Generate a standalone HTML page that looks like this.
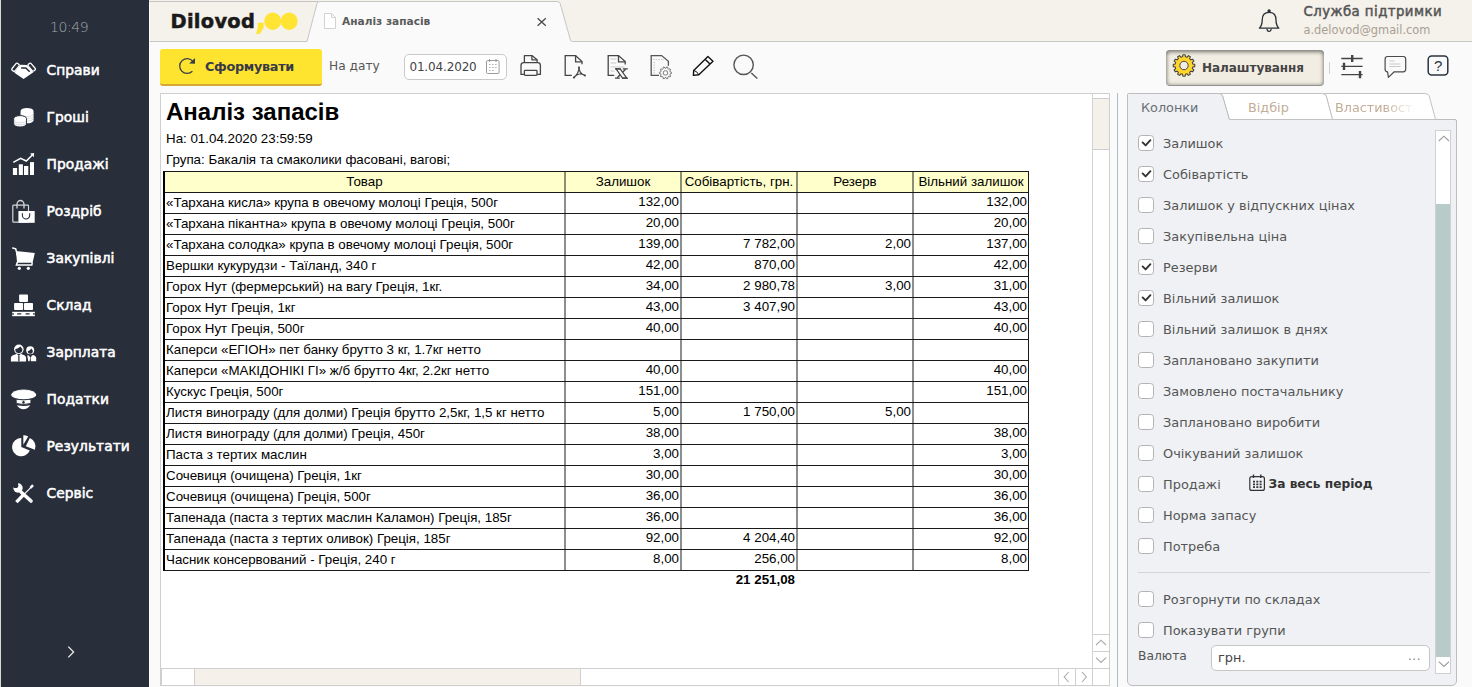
<!DOCTYPE html>
<html lang="uk">
<head>
<meta charset="utf-8">
<title>Dilovod - Аналіз запасів</title>
<style>
*{box-sizing:border-box;margin:0;padding:0}
html,body{width:1472px;height:687px;overflow:hidden;background:#fafafa}
body{position:relative;font-family:"DejaVu Sans","Liberation Sans",sans-serif;font-size:13px;color:#555}
.abs{position:absolute}
.nw{white-space:nowrap}
/* sidebar */
#side{position:absolute;left:0;top:0;width:149px;height:687px;background:#282e3a;border-left:1px solid #d8d8d8}
#clock{position:absolute;left:49px;top:18px;font-family:"DejaVu Sans","Liberation Sans",sans-serif;font-weight:200;font-size:14px;color:#a3a8b0;letter-spacing:-0.4px;line-height:18px}
.mi{position:absolute;left:45.5px;color:#fff;font-weight:normal;-webkit-text-stroke:0.55px #fff;font-size:13.8px;line-height:18px;white-space:nowrap;letter-spacing:0.05px}
.ic{position:absolute;left:0;overflow:visible}
/* top bar */
#top{position:absolute;left:149px;top:0;width:1323px;height:42px;background:#f5f1eb}
#logo{position:absolute;left:170.5px;top:8.5px;font-family:"DejaVu Sans","Liberation Sans",sans-serif;font-weight:bold;font-size:19.4px;line-height:26px;color:#1a1a1a;white-space:nowrap;letter-spacing:0.3px;-webkit-text-stroke:0.5px #1a1a1a}
#lc{position:absolute;left:84.2px;top:-10.5px;font-size:33px;line-height:40px;color:#ffe433;-webkit-text-stroke:0}
.lz{position:absolute;top:0.5px;font-size:15px;line-height:26px;color:#ffe433;-webkit-text-stroke:0}
#tabt{left:342px;top:12px;font-size:10.6px;font-weight:bold;color:#5a5a5a;line-height:18px}
#usr{left:1303.5px;top:3px;font-size:13.3px;font-weight:normal;-webkit-text-stroke:0.5px #555;letter-spacing:0.45px;color:#555;line-height:18px}
#eml{left:1303.5px;top:22px;font-size:11.4px;color:#a89f92;line-height:16px}
/* toolbar */
#tb{position:absolute;left:150px;top:42px;width:1322px;height:52px;background:#fafafa}
#btn{position:absolute;left:160px;top:49px;width:162px;height:37px;background:#ffe42f;border-radius:3px;border-bottom:2px solid #d5a832}
#btn span{position:absolute;left:45px;top:9px;font-weight:bold;font-size:12.8px;line-height:18px;color:#383a46;white-space:nowrap;letter-spacing:-0.3px}
#nadatu{left:329px;top:57px;font-size:12.2px;line-height:18px;color:#555}
#date{position:absolute;left:404px;top:54px;width:103px;height:26px;background:#fff;border:1px solid #c9c9c9;border-radius:5px}
#date span{position:absolute;left:4.4px;top:3px;font-size:12px;line-height:18px;color:#444;letter-spacing:-0.15px;white-space:nowrap}
#sett{position:absolute;left:1166px;top:50px;width:158px;height:36px;background:#f1ede2;border-radius:4px;box-shadow:inset 0 2px 4px rgba(0,0,0,.42), inset 0 0 4px rgba(0,0,0,.28);border-bottom:1px solid #929292}
#sett span{position:absolute;left:36px;top:9px;font-weight:bold;font-size:12px;line-height:18px;color:#444;white-space:nowrap;letter-spacing:-0.05px}
/* report */
#rep{position:absolute;left:160px;top:93px;width:950px;height:593px;background:#fff;border:1px solid #cfcfcf}
.rt{position:absolute;font-family:"Liberation Sans",sans-serif;color:#000;white-space:nowrap}
#grid{position:absolute;left:163px;top:171px;width:866px;height:400px;border:1px solid #1a1a1a;border-left:2px solid #000}
#grid .hd{position:absolute;left:0;top:0;width:863px;height:20px;background:#ffffcc}
#grid .hl{position:absolute;left:0;width:863px;height:1px;background:#1a1a1a;margin-top:-172px}
#grid .vl{position:absolute;top:0;width:1px;height:398px;background:#484848;margin-left:-165px}
.c{position:absolute;font-family:"Liberation Sans",sans-serif;font-size:13.333px;line-height:21px;height:21px;margin-top:-1px;color:#000;white-space:nowrap}
.c.th{text-align:center;line-height:20px;height:20px;margin-top:0}
.c.n{text-align:right;margin-top:-2px}
#vsb{position:absolute;left:1092px;top:94px;width:17px;height:574px;background:#fff;border-left:1px solid #d2d2d2}
#vth{position:absolute;left:1093px;top:98px;width:16px;height:52px;background:#f5f0ea;border-top:1px solid #cfcfcf;border-bottom:1px solid #cfcfcf}
#hsb{position:absolute;left:161px;top:668px;width:948px;height:17px;background:#fff;border-top:1px solid #cfcfcf;border-left:1px solid #cfcfcf}
#hth{position:absolute;left:194px;top:669px;width:387px;height:16px;background:#f5f0ea;border-left:1px solid #cfcfcf;border-right:1px solid #cfcfcf}
/* right panel */
#splt{position:absolute;left:1117px;top:93px;width:1px;height:594px;background:#a9bfc6}
.tabt{position:absolute;top:99px;font-size:12.8px;line-height:18px;white-space:nowrap}
#tab3{width:82px;overflow:hidden;-webkit-mask-image:linear-gradient(to right,#000 60%,transparent 98%);mask-image:linear-gradient(to right,#000 60%,transparent 98%)}
.cb{position:absolute;left:1138px;width:16px;height:16px;background:#fff;border:1px solid #b3b3b3;border-radius:3.5px}
.lb{position:absolute;left:1163px;font-size:12.9px;line-height:18px;color:#555;white-space:nowrap}
#period{left:1268.5px;top:475px;font-size:12.2px;font-weight:bold;line-height:18px;color:#333}
#sepl{position:absolute;left:1138px;top:572px;width:292px;height:1px;background:#d4d4d4}
#cur{position:absolute;left:1211px;top:645px;width:219px;height:26px;background:#fff;border:1px solid #c6c6c6;border-radius:5px}
#cur span{position:absolute;left:6px;top:3px;font-size:12.9px;line-height:18px;color:#444}
#cur i{position:absolute;right:8px;top:1px;font-style:normal;font-size:12px;line-height:18px;color:#888;letter-spacing:0.5px}
#psb{position:absolute;left:1435px;top:130px;width:16px;height:544px;background:#fff;border:1px solid #d0d0d0}
#pth{position:absolute;left:1436px;top:204px;width:14px;height:453px;background:#b9cbc8}
#pan{position:absolute;left:1127px;top:119px;width:330px;height:567px;background:#eff1f4;border:1px solid #bdbdbd;border-radius:0 2px 5px 5px}
</style>
</head>
<body>
<div id="side">
<div id="clock">10:49</div>
<div class="mi" style="top:61px">Справи</div>
<div class="mi" style="top:108px">Гроші</div>
<div class="mi" style="top:155px">Продажі</div>
<div class="mi" style="top:202px">Роздріб</div>
<div class="mi" style="top:249px">Закупівлі</div>
<div class="mi" style="top:296px">Склад</div>
<div class="mi" style="top:343px">Зарплата</div>
<div class="mi" style="top:390px">Податки</div>
<div class="mi" style="top:437px">Результати</div>
<div class="mi" style="top:484px">Сервіс</div>
<svg class="ic" style="left:-1px;top:0" width="149" height="687" viewBox="0 0 149 687">
<!-- handshake -->
<g>
<polygon points="20.3,64.7 26.8,64.9 33.4,72.2 23.6,79 14.4,72.8" fill="#fff"/>
<path d="M21.1,67.9 L25.8,67.9 L29.7,71.7" fill="none" stroke="#282e3a" stroke-width="1.5"/>
<rect x="-4.4" y="-1.9" width="8.8" height="3.8" rx="1.3" transform="translate(15.5,67.3) rotate(-51)" fill="#282e3a" stroke="#fff" stroke-width="1.3"/>
<rect x="-4.3" y="-1.9" width="8.6" height="3.8" rx="1.3" transform="translate(31.7,67.2) rotate(49)" fill="#282e3a" stroke="#fff" stroke-width="1.3"/>
</g>
<!-- coins -->
<g>
<path d="M20.6,110.9 A6.45,3 0 0 1 33.5,110.9 L33.5,120.3 A6.45,3 0 0 1 20.6,120.3 Z" fill="#fff"/>
<path d="M20.6,113.6 A6.45,3 0 0 0 33.5,113.6 M20.6,115.8 A6.45,3 0 0 0 33.5,115.8 M20.6,118 A6.45,3 0 0 0 33.5,118" fill="none" stroke="#c4c8ce" stroke-width="0.7"/>
<path d="M13.7,118.6 A6.4,3 0 0 1 26.5,118.6 L26.5,124 A6.4,3 0 0 1 13.7,124 Z" fill="#fff" stroke="#282e3a" stroke-width="1"/>
<path d="M13.9,120.6 A6.4,3 0 0 0 26.3,120.6 M13.9,122.6 A6.4,3 0 0 0 26.3,122.6" fill="none" stroke="#c4c8ce" stroke-width="0.7"/>
</g>
<!-- chart -->
<g fill="#fff">
<rect x="12.9" y="168" width="4.2" height="7"/>
<rect x="18.8" y="164.3" width="4.1" height="10.7"/>
<rect x="24" y="166" width="4.3" height="9"/>
<rect x="30" y="162.1" width="4" height="12.9"/>
<path d="M13.3,162.3 L20.6,158.4 L26.3,161 L32.3,155" fill="none" stroke="#fff" stroke-width="1.5" stroke-linejoin="miter"/>
<polygon points="34.1,153.1 33.9,157.3 30,153.6"/>
</g>
<!-- bags -->
<g>
<rect x="12.8" y="205.2" width="15.7" height="17" rx="0.8" fill="none" stroke="#d4d6da" stroke-width="1.2"/>
<path d="M17,208.6 L17,204.2 A3.5,3.7 0 0 1 24,204.2 L24,208.6" fill="none" stroke="#d4d6da" stroke-width="1.3"/>
<rect x="18.4" y="211" width="16.3" height="11.8" fill="#fff"/>
<path d="M22.4,213.3 L22.4,215.2 A3.65,3.8 0 0 0 29.7,215.2 L29.7,213.3" fill="none" stroke="#282e3a" stroke-width="1.1"/>
</g>
<!-- cart -->
<g fill="#fff">
<path d="M12.8,248 L15.7,248.8 L17.6,256" fill="none" stroke="#fff" stroke-width="1.5" stroke-linecap="round"/>
<polygon points="15.9,251 34.8,253 32.6,262.8 17.1,262.8"/>
<path d="M17.4,262 L16.4,265 L31.8,265 L32.3,262.5" fill="none" stroke="#fff" stroke-width="1.5"/>
<circle cx="19.3" cy="268.3" r="1.6"/>
<circle cx="28.3" cy="268.3" r="1.6"/>
</g>
<!-- warehouse -->
<g fill="#fff">
<rect x="19.1" y="294.4" width="8.9" height="7.5" rx="0.8"/>
<rect x="14.1" y="302.9" width="9" height="7.1" rx="0.8"/>
<rect x="24" y="302.9" width="9" height="7.1" rx="0.8"/>
<rect x="12.2" y="311.8" width="22.7" height="4.4"/>
<rect x="12.2" y="313.3" width="1.8" height="1.3" fill="#282e3a"/>
<rect x="17" y="313.3" width="4.4" height="1.3" fill="#282e3a" rx="0.6"/>
<rect x="25.4" y="313.3" width="4.4" height="1.3" fill="#282e3a" rx="0.6"/>
<rect x="33" y="313.3" width="1.9" height="1.3" fill="#282e3a"/>
</g>
<!-- people -->
<g fill="#fff">
<circle cx="18.85" cy="349.3" r="4.8"/>
<path d="M15.2,349.3 Q18,348.8 20.6,346.6 Q21.6,348.6 22.4,349 A3.6,4 0 0 1 15.2,349.3 Z" fill="#282e3a"/>
<path d="M10.9,361.6 L10.9,358.3 Q10.9,355.6 14.5,354.7 L16.8,353.8 L18.85,356 L20.9,353.8 L23,354.7 Q26,355.6 26.1,358.3 L26.1,361.6 Z"/>
<path d="M18.85,355.6 L18.2,356.6 L18.3,361.6 L19.5,361.6 L19.5,356.6 Z" fill="#282e3a"/>
<circle cx="30.2" cy="350.2" r="4"/>
<path d="M27.7,351.2 Q30,350.6 31.6,348.4 Q32.2,350 32.8,350.6 A2.55,2.9 0 0 1 27.7,351.2 Z" fill="#282e3a"/>
<path d="M27.2,355.4 Q29,354.6 30.2,357.4 L29.6,361.2 L28.3,361.2 Z"/>
<path d="M30.9,361.2 L30.6,358 Q31.6,355.2 33,355 Q36.2,355.8 36.2,358.6 L36.2,361.2 Z"/>
</g>
<!-- cap -->
<g fill="#fff">
<ellipse cx="23.7" cy="394.8" rx="12.5" ry="4.7"/>
<path d="M13,392.2 Q23.7,387.6 34.4,392.2" fill="none" stroke="#fff" stroke-width="0.8"/>
<path d="M16.1,399.2 Q23.7,400.6 31,399.2 L30.8,403.4 Q23.7,405.6 16.3,403.4 Z" stroke="#282e3a" stroke-width="0.9"/>
<path d="M16.9,405.2 Q23.7,406.8 30.2,405.2 Q27.5,409.2 23.5,409.2 Q19.5,409.2 16.9,405.2 Z"/>
<ellipse cx="23.5" cy="402.2" rx="1.2" ry="1.5" fill="#282e3a"/>
</g>
<!-- pie -->
<g fill="#fff">
<path d="M21.3,447.1 L21.3,437.9 A9.2,9.2 0 1 0 29.8,450.5 Z"/>
<path d="M23.3,444.8 L23.3,435.2 A9.6,9.6 0 0 1 28.2,436.5 Z"/>
<path d="M25.8,446.3 L29.9,437.9 A9.4,9.4 0 0 1 34.9,449.7 Z"/>
</g>
<!-- tools -->
<g>
<line x1="21" y1="492" x2="31" y2="501" stroke="#fff" stroke-width="3.6" stroke-linecap="round"/>
<circle cx="18" cy="488" r="4.7" fill="#fff"/>
<circle cx="15.6" cy="485.4" r="2.7" fill="#282e3a"/>
<polygon points="11.5,484.5 16.5,480 18.2,483.8 13.8,487.6" fill="#282e3a"/>
<circle cx="31" cy="501" r="0.7" fill="#c4c8ce"/>
<line x1="33" y1="485.2" x2="30.4" y2="487.9" stroke="#fff" stroke-width="2.4"/>
<line x1="31" y1="487.3" x2="23.5" y2="494.8" stroke="#fff" stroke-width="1.2"/>
<line x1="24.6" y1="493.6" x2="16.4" y2="502.2" stroke="#fff" stroke-width="3.4"/>
</g>
<!-- chevron -->
<path d="M68.3,646.6 L73.6,652 L68.3,657.4" fill="none" stroke="#eceef0" stroke-width="1.3"/>
</svg>
</div>
<div id="top"></div>
<svg class="abs" style="left:149px;top:0" width="1323" height="43" viewBox="149 0 1323 43">
<path d="M149,1.5 L318,1.5" stroke="#c4c4c4" stroke-width="1" fill="none"/>
<path d="M149,41.5 L307,41.5 L317,3.5 Q317.6,1.5 320,1.5 L556.5,1.5 Q559.4,1.5 560.2,3.5 L570.4,40 Q570.9,41.5 572.5,41.5 L1472,41.5 L1472,43 L149,43 Z" fill="#fafafa" stroke="none"/>
<path d="M149,41.5 L307,41.5 L317,3.5 Q317.6,1.5 320,1.5 L556.5,1.5 Q559.4,1.5 560.2,3.5 L570.4,40 Q570.9,41.5 572.5,41.5 L1472,41.5" fill="none" stroke="#c6c6c6" stroke-width="1"/>
<!-- doc icon -->
<path d="M324.5,13.5 L331.5,13.5 L335.5,17.5 L335.5,28.5 L324.5,28.5 Z" fill="#fff" stroke="#d2d2d2" stroke-width="1"/>
<path d="M331.5,13.5 L331.5,17.5 L335.5,17.5" fill="none" stroke="#d2d2d2" stroke-width="1"/>
<!-- close -->
<path d="M537.6,18.2 L545.8,25.8 M545.8,18.2 L537.6,25.8" stroke="#4a4a4a" stroke-width="1.3" fill="none"/>
<!-- logo ovals -->
<ellipse cx="272.7" cy="21.2" rx="8.4" ry="8.7" fill="#ffe433"/>
<ellipse cx="289.2" cy="21.2" rx="8.4" ry="8.7" fill="#ffe433"/>
<!-- bell -->
<path d="M1259.4,28.2 Q1262.2,25.4 1262.2,20 Q1262.2,12.4 1269.1,12.4 Q1276,12.4 1276,20 Q1276,25.4 1278.8,28.2 Z" fill="none" stroke="#2b3138" stroke-width="1.3" stroke-linejoin="round"/>
<circle cx="1269.1" cy="11" r="1.7" fill="#2b3138"/>
<path d="M1267,28.8 A2.1,2.6 0 0 0 1271.2,28.8" fill="none" stroke="#2b3138" stroke-width="1.2"/>
</svg>
<div id="logo"><span>Dilovod</span><span id="lc">,</span><span class="lz" style="left:96.2px">0</span><span class="lz" style="left:112.7px">0</span></div>
<div class="abs nw" id="tabt">Аналіз запасів</div>
<div class="abs nw" id="usr">Служба підтримки</div>
<div class="abs nw" id="eml">a.delovod@gmail.com</div>
<div id="tb"></div><div class="abs" style="left:149px;top:2px;width:1px;height:685px;background:#fdfcfb"></div>
<div id="btn"><span>Сформувати</span></div>
<div class="abs nw" id="nadatu">На дату</div>
<div id="date"><span>01.04.2020</span></div>
<div id="sett"><span>Налаштування</span></div>
<svg class="abs" style="left:150px;top:42px" width="1322" height="52" viewBox="150 42 1322 52">
<!-- reload -->
<path d="M192.4,71.2 A7.4,7.4 0 1 1 192.9,61.4" fill="none" stroke="#3a3f4a" stroke-width="1.3"/>
<polygon points="195,58 195,63.8 189.2,63.5" fill="#3a3f4a"/>
<!-- calendar -->
<g fill="none" stroke="#9a9a9a" stroke-width="1">
<rect x="486.5" y="60.5" width="12.6" height="13" rx="1.2"/>
<path d="M489.5,59 L489.5,62 M496,59 L496,62" stroke-width="1.1"/>
<path d="M489,64.5 h1.6 m1.4,0 h1.6 m1.4,0 h1.6 M489,67.5 h1.6 m1.4,0 h1.6 m1.4,0 h1.6 M489,70.5 h1.6 m1.4,0 h1.6" stroke="#b5b5b5" stroke-width="1.2"/>
</g>
<!-- printer -->
<g fill="none" stroke="#454545" stroke-width="1.3" stroke-linejoin="round">
<path d="M524.4,62.4 L524.4,55.6 L531.9,55.6 L537.1,59.8 L537.1,62.4"/>
<path d="M531.9,55.6 L531.9,59.8 L537.1,59.8"/>
<path d="M524.4,74.4 L521,74.4 L521,65.4 Q521,62.6 523.8,62.6 L537.6,62.6 Q540.4,62.6 540.4,65.4 L540.4,74.4 L537,74.4"/>
<rect x="524.4" y="70.3" width="12.6" height="5" rx="0.8"/>
</g>
<!-- pdf -->
<g fill="none" stroke="#454545" stroke-width="1.3">
<path d="M571.8,75.4 L565.2,75.4 L565.2,55.6 L575.6,55.6 L582,61.6 L582,64.2"/>
<path d="M575.6,55.6 L575.6,61.9 L582,61.9"/>
<path d="M579,67.4 C579,71.4 578.2,73.6 573.9,77.5 M579,67.4 C579,71.4 580.6,73.8 584.9,75.3 M574,77.4 C577.8,73 580.8,73.2 584.9,75.3" stroke-width="1.25" stroke-linecap="round"/>
<circle cx="579" cy="67.5" r="1" fill="#454545" stroke="none"/>
<circle cx="574" cy="77.5" r="1.1" fill="#454545" stroke="none"/>
<circle cx="584.9" cy="75.4" r="1" fill="#454545" stroke="none"/>
</g>
<!-- xls -->
<g fill="none" stroke="#454545" stroke-width="1.3">
<path d="M610.5,59 h6 M610.5,63 h6 M610.5,67 h14 M610.5,71 h4" stroke="#d9d9d9" stroke-width="1.4"/>
<path d="M614.2,75.4 L608.2,75.4 L608.2,55.6 L618.5,55.6 L625.2,61.6 L625.2,64.4"/>
<path d="M618.5,55.6 L618.5,61.9 L625.2,61.9"/>
<path d="M625.6,69.2 L617.2,77.8" stroke-width="1.3"/>
<polygon points="616,68.9 620.2,68.9 626.8,78.1 622.6,78.1" fill="#fafafa" stroke-width="1.2"/>
<path d="M615,68.8 L620.6,68.8 M622.8,68.8 L627.8,68.8 M615,78.2 L619.8,78.2 M622,78.2 L627.9,78.2" stroke-width="1.3"/>
</g>
<!-- settings doc -->
<g fill="none" stroke="#555" stroke-width="1.3">
<path d="M653,59.6 h11 M654.5,57.5 v0 M653.5,62.5 h2 M653.5,65.2 h2 M653.5,67.8 h2 M653.5,70.4 h2 M653.5,73 h2" stroke="#c4c4c4" stroke-width="1" stroke-dasharray="1.6 1"/>
<path d="M659,75.4 L651.2,75.4 L651.2,55.6 L661.6,55.6 L668.4,61.2 L668.4,65.8"/>
<circle cx="665.5" cy="72.9" r="2.3" stroke="#7a7a7a" stroke-width="1"/>
<path id="gearS" stroke="#7a7a7a" stroke-width="1" stroke-linejoin="round" d="M670.21,72.00 L671.57,72.29 L671.57,73.51 L670.21,73.80 L669.84,74.94 L670.77,75.97 L670.05,76.96 L668.79,76.40 L667.81,77.11 L667.96,78.48 L666.79,78.86 L666.10,77.66 L664.90,77.66 L664.21,78.86 L663.04,78.48 L663.19,77.11 L662.21,76.40 L660.95,76.96 L660.23,75.97 L661.16,74.94 L660.79,73.80 L659.43,73.51 L659.43,72.29 L660.79,72.00 L661.16,70.86 L660.23,69.83 L660.95,68.84 L662.21,69.40 L663.19,68.69 L663.04,67.32 L664.21,66.94 L664.90,68.14 L666.10,68.14 L666.79,66.94 L667.96,67.32 L667.81,68.69 L668.79,69.40 L670.05,68.84 L670.77,69.83 L669.84,70.86 Z"/>
</g>
<!-- pencil -->
<g fill="none" stroke="#111" stroke-width="1.4" stroke-linejoin="round">
<path d="M707.9,56.6 L713,61.2 L698.8,74.8 L693.4,75.4 L693.7,70.4 Z"/>
<path d="M705.3,59.4 L710,64"/>
<path d="M693.7,70.4 Q697,71 698.8,74.8" stroke-width="1"/>
</g>
<!-- magnifier -->
<g fill="none" stroke="#555" stroke-width="1.4">
<circle cx="743.6" cy="64.8" r="9.7"/>
<path d="M751.3,72.9 L757.3,78.6"/>
</g>
<!-- separator -->
<path d="M1329.5,62 L1329.5,74" stroke="#cfcfcf" stroke-width="1"/>
<!-- sliders -->
<g stroke="#444" fill="none">
<path d="M1341.3,58.5 H1362.6 M1341.3,66.4 H1362.6 M1341.3,74.6 H1362.6" stroke-width="1.3"/>
<path d="M1352.2,55 V62 M1344,62.8 V70 M1360,71 V78.2" stroke-width="2.4"/>
</g>
<!-- comment -->
<g fill="none" stroke="#4a4a4a" stroke-width="1.2" stroke-linejoin="round">
<path d="M1387.6,71.8 Q1385.1,71.8 1385.1,69.3 L1385.1,59 Q1385.1,56.5 1387.6,56.5 L1403.2,56.5 Q1405.7,56.5 1405.7,59 L1405.7,69.3 Q1405.7,71.8 1403.2,71.8 L1394.2,71.8 L1388.4,77.4 L1387.6,71.8 Z"/>
<path d="M1389.5,61 h5 M1389.5,64 h11 M1389.5,66.5 h11" stroke="#c9c9c9" stroke-width="1"/>
</g>
<!-- help -->
<rect x="1428.2" y="56" width="19.6" height="19" rx="3.5" fill="none" stroke="#2b3440" stroke-width="1.5"/>
<text x="1438.2" y="71" font-family="Liberation Sans, DejaVu Sans, sans-serif" font-size="15" fill="#2b3440" text-anchor="middle">?</text>
</svg>
<svg class="abs" style="left:1170px;top:52px" width="28" height="28" viewBox="1170 52 28 28">
<path fill="#ffd52b" stroke="#444" stroke-width="1.1" stroke-linejoin="round" d="M1192.78,64.06 L1194.74,64.37 L1194.74,66.63 L1192.78,66.94 L1192.33,68.65 L1193.87,69.89 L1192.74,71.85 L1190.89,71.14 L1189.64,72.39 L1190.35,74.24 L1188.39,75.37 L1187.15,73.83 L1185.44,74.28 L1185.13,76.24 L1182.87,76.24 L1182.56,74.28 L1180.85,73.83 L1179.61,75.37 L1177.65,74.24 L1178.36,72.39 L1177.11,71.14 L1175.26,71.85 L1174.13,69.89 L1175.67,68.65 L1175.22,66.94 L1173.26,66.63 L1173.26,64.37 L1175.22,64.06 L1175.67,62.35 L1174.13,61.11 L1175.26,59.15 L1177.11,59.86 L1178.36,58.61 L1177.65,56.76 L1179.61,55.63 L1180.85,57.17 L1182.56,56.72 L1182.87,54.76 L1185.13,54.76 L1185.44,56.72 L1187.15,57.17 L1188.39,55.63 L1190.35,56.76 L1189.64,58.61 L1190.89,59.86 L1192.74,59.15 L1193.87,61.11 L1192.33,62.35 Z"/>
<circle cx="1184" cy="65.5" r="4.2" fill="#f1ede2" stroke="#444" stroke-width="1"/>
</svg>
<div id="rep"></div>
<div class="rt" style="left:166px;top:98px;font-size:24px;font-weight:bold;line-height:28px">Аналіз запасів</div>
<div class="rt" style="left:166px;top:131px;font-size:13.333px;line-height:16px">На: 01.04.2020 23:59:59</div>
<div class="rt" style="left:166px;top:152px;font-size:13.333px;line-height:16px">Група: Бакалія та смаколики фасовані, вагові;</div>
<div id="grid">
<div class="hd"></div>
<div class="hl" style="top:192px"></div>
<div class="hl" style="top:213px"></div>
<div class="hl" style="top:234px"></div>
<div class="hl" style="top:255px"></div>
<div class="hl" style="top:276px"></div>
<div class="hl" style="top:297px"></div>
<div class="hl" style="top:318px"></div>
<div class="hl" style="top:339px"></div>
<div class="hl" style="top:360px"></div>
<div class="hl" style="top:381px"></div>
<div class="hl" style="top:402px"></div>
<div class="hl" style="top:423px"></div>
<div class="hl" style="top:444px"></div>
<div class="hl" style="top:465px"></div>
<div class="hl" style="top:486px"></div>
<div class="hl" style="top:507px"></div>
<div class="hl" style="top:528px"></div>
<div class="hl" style="top:549px"></div>
</div>
<svg class="abs" style="left:560px;top:172px" width="360" height="399" viewBox="560 172 360 399"><path d="M565,172 V570 M681,172 V570 M797,172 V570 M913,172 V570" stroke="#1c1c1c" stroke-width="1" fill="none"/></svg>
<div class="c th" style="left:164px;width:401px;top:172px">Товар</div>
<div class="c th" style="left:565px;width:116px;top:172px">Залишок</div>
<div class="c th" style="left:681px;width:116px;top:172px">Собівартість, грн.</div>
<div class="c th" style="left:797px;width:116px;top:172px">Резерв</div>
<div class="c th" style="left:913px;width:116px;top:172px">Вільний залишок</div>
<div class="c" style="left:166px;top:193px">«Тархана кисла» крупа в овечому молоці Греція, 500г</div>
<div class="c n" style="left:566px;width:113px;top:193px">132,00</div>
<div class="c n" style="left:914px;width:113px;top:193px">132,00</div>
<div class="c" style="left:166px;top:214px">«Тархана пікантна» крупа в овечому молоці Греція, 500г</div>
<div class="c n" style="left:566px;width:113px;top:214px">20,00</div>
<div class="c n" style="left:914px;width:113px;top:214px">20,00</div>
<div class="c" style="left:166px;top:235px">«Тархана солодка» крупа в овечому молоці Греція, 500г</div>
<div class="c n" style="left:566px;width:113px;top:235px">139,00</div>
<div class="c n" style="left:682px;width:113px;top:235px">7 782,00</div>
<div class="c n" style="left:798px;width:113px;top:235px">2,00</div>
<div class="c n" style="left:914px;width:113px;top:235px">137,00</div>
<div class="c" style="left:166px;top:256px">Вершки кукурудзи - Таїланд, 340 г</div>
<div class="c n" style="left:566px;width:113px;top:256px">42,00</div>
<div class="c n" style="left:682px;width:113px;top:256px">870,00</div>
<div class="c n" style="left:914px;width:113px;top:256px">42,00</div>
<div class="c" style="left:166px;top:277px">Горох Нут (фермерський) на вагу Греція, 1кг.</div>
<div class="c n" style="left:566px;width:113px;top:277px">34,00</div>
<div class="c n" style="left:682px;width:113px;top:277px">2 980,78</div>
<div class="c n" style="left:798px;width:113px;top:277px">3,00</div>
<div class="c n" style="left:914px;width:113px;top:277px">31,00</div>
<div class="c" style="left:166px;top:298px">Горох Нут Греція, 1кг</div>
<div class="c n" style="left:566px;width:113px;top:298px">43,00</div>
<div class="c n" style="left:682px;width:113px;top:298px">3 407,90</div>
<div class="c n" style="left:914px;width:113px;top:298px">43,00</div>
<div class="c" style="left:166px;top:319px">Горох Нут Греція, 500г</div>
<div class="c n" style="left:566px;width:113px;top:319px">40,00</div>
<div class="c n" style="left:914px;width:113px;top:319px">40,00</div>
<div class="c" style="left:166px;top:340px">Каперси «ЕГІОН» пет банку брутто 3 кг, 1.7кг нетто</div>
<div class="c" style="left:166px;top:361px">Каперси «МАКІДОНІКІ ГІ» ж/б брутто 4кг, 2.2кг нетто</div>
<div class="c n" style="left:566px;width:113px;top:361px">40,00</div>
<div class="c n" style="left:914px;width:113px;top:361px">40,00</div>
<div class="c" style="left:166px;top:382px">Кускус Греція, 500г</div>
<div class="c n" style="left:566px;width:113px;top:382px">151,00</div>
<div class="c n" style="left:914px;width:113px;top:382px">151,00</div>
<div class="c" style="left:166px;top:403px">Листя винограду (для долми) Греція брутто 2,5кг, 1,5 кг нетто</div>
<div class="c n" style="left:566px;width:113px;top:403px">5,00</div>
<div class="c n" style="left:682px;width:113px;top:403px">1 750,00</div>
<div class="c n" style="left:798px;width:113px;top:403px">5,00</div>
<div class="c" style="left:166px;top:424px">Листя винограду (для долми) Греція, 450г</div>
<div class="c n" style="left:566px;width:113px;top:424px">38,00</div>
<div class="c n" style="left:914px;width:113px;top:424px">38,00</div>
<div class="c" style="left:166px;top:445px">Паста з тертих маслин</div>
<div class="c n" style="left:566px;width:113px;top:445px">3,00</div>
<div class="c n" style="left:914px;width:113px;top:445px">3,00</div>
<div class="c" style="left:166px;top:466px">Сочевиця (очищена) Греція, 1кг</div>
<div class="c n" style="left:566px;width:113px;top:466px">30,00</div>
<div class="c n" style="left:914px;width:113px;top:466px">30,00</div>
<div class="c" style="left:166px;top:487px">Сочевиця (очищена) Греція, 500г</div>
<div class="c n" style="left:566px;width:113px;top:487px">36,00</div>
<div class="c n" style="left:914px;width:113px;top:487px">36,00</div>
<div class="c" style="left:166px;top:508px">Тапенада (паста з тертих маслин Каламон) Греція, 185г</div>
<div class="c n" style="left:566px;width:113px;top:508px">36,00</div>
<div class="c n" style="left:914px;width:113px;top:508px">36,00</div>
<div class="c" style="left:166px;top:529px">Тапенада (паста з тертих оливок) Греція, 185г</div>
<div class="c n" style="left:566px;width:113px;top:529px">92,00</div>
<div class="c n" style="left:682px;width:113px;top:529px">4 204,40</div>
<div class="c n" style="left:914px;width:113px;top:529px">92,00</div>
<div class="c" style="left:166px;top:550px">Часник консервований - Греція, 240 г</div>
<div class="c n" style="left:566px;width:113px;top:550px">8,00</div>
<div class="c n" style="left:682px;width:113px;top:550px">256,00</div>
<div class="c n" style="left:914px;width:113px;top:550px">8,00</div>
<div class="c n" style="left:682px;width:113px;top:571px;font-weight:bold">21 251,08</div>
<div id="vsb"></div><div id="vth"></div>
<div id="hsb"></div><div id="hth"></div>
<svg class="abs" style="left:1058px;top:634px" width="52" height="52" viewBox="1058 634 52 52">
<g fill="none" stroke="#cfcfcf" stroke-width="1">
<path d="M1092.5,634.5 H1109 M1092.5,651.5 H1109 M1058.5,668.5 V685 M1075.5,668.5 V685 M1092.5,668.5 V685"/>
<path d="M1096,645 L1101,640.2 L1106,645 M1096,657.6 L1101,662.4 L1106,657.6 M1068.6,672 L1064.2,677 L1068.6,682 M1082,672 L1086.4,677 L1082,682" stroke="#a9a9a9" stroke-width="1.1"/>
</g>
</svg>
<div id="splt"></div>
<div id="pan"></div>
<svg class="abs" style="left:1126px;top:92px" width="334" height="30" viewBox="1126 92 334 30">
<path d="M1332.5,119.5 L1326.2,96 Q1325.6,93.5 1323,93.5 L1424.5,93.5 Q1428.4,93.5 1429.2,96 L1435.6,119.5 Z" fill="#fff" stroke="#c2c2c2"/>
<path d="M1229.4,119.5 L1222.6,96 Q1222,93.5 1219,93.5 L1321.5,93.5 Q1325.4,93.5 1326.2,96 L1332.5,119.5 Z" fill="#fff" stroke="#c2c2c2"/>
<path d="M1127.5,120.5 L1127.5,94.5 Q1127.5,93.5 1128.5,93.5 L1219,93.5 Q1222,93.5 1222.6,96 L1229.4,119.5 L1229.4,120.5 Z" fill="#eff1f4" stroke="none"/>
<path d="M1127.5,120.5 L1127.5,94.5 Q1127.5,93.5 1128.5,93.5 L1219,93.5 Q1222,93.5 1222.6,96 L1229.4,119.5" fill="none" stroke="#bdbdbd"/>
</svg>
<div class="tabt" style="left:1141px;color:#6a6e76">Колонки</div>
<div class="tabt" style="left:1248px;color:#c2ad97">Відбір</div>
<div class="tabt" id="tab3" style="left:1335px;color:#c2ad97">Властивості</div>
<div class="cb on" style="top:135px"></div><div class="lb" style="top:135px">Залишок</div>
<div class="cb on" style="top:166px"></div><div class="lb" style="top:166px">Собівартість</div>
<div class="cb" style="top:197px"></div><div class="lb" style="top:197px">Залишок у відпускних цінах</div>
<div class="cb" style="top:228px"></div><div class="lb" style="top:228px">Закупівельна ціна</div>
<div class="cb on" style="top:259px"></div><div class="lb" style="top:259px">Резерви</div>
<div class="cb on" style="top:290px"></div><div class="lb" style="top:290px">Вільний залишок</div>
<div class="cb" style="top:321px"></div><div class="lb" style="top:321px">Вільний залишок в днях</div>
<div class="cb" style="top:352px"></div><div class="lb" style="top:352px">Заплановано закупити</div>
<div class="cb" style="top:383px"></div><div class="lb" style="top:383px">Замовлено постачальнику</div>
<div class="cb" style="top:414px"></div><div class="lb" style="top:414px">Заплановано виробити</div>
<div class="cb" style="top:445px"></div><div class="lb" style="top:445px">Очікуваний залишок</div>
<div class="cb" style="top:476px"></div><div class="lb" style="top:476px">Продажі</div>
<div class="cb" style="top:507px"></div><div class="lb" style="top:507px">Норма запасу</div>
<div class="cb" style="top:538px"></div><div class="lb" style="top:538px">Потреба</div>
<div class="cb" style="top:591px"></div><div class="lb" style="top:591px">Розгорнути по складах</div>
<div class="cb" style="top:622px"></div><div class="lb" style="top:622px">Показувати групи</div>
<div class="abs nw" id="period">За весь період</div>
<div id="sepl"></div>
<div class="lb" style="left:1138px;top:647px;font-size:12.3px">Валюта</div>
<div id="cur"><span>грн.</span><i>...</i></div>
<div id="psb"></div><div id="pth"></div>
<svg class="abs" style="left:1126px;top:126px" width="334" height="552" viewBox="1126 126 334 552">
<g fill="none" stroke="#9a9a9a" stroke-width="1.1">
<path d="M1438.8,141 L1443.9,136.2 L1449,141 M1438.8,661.6 L1443.9,666.4 L1449,661.6"/>
</g>
<g fill="none" stroke="#333" stroke-width="1.9" stroke-linecap="round" stroke-linejoin="round">
<path d="M1142.6,142.4 L1145.6,145.4 L1150.4,140.2"/>
<path d="M1142.6,173.4 L1145.6,176.4 L1150.4,171.2"/>
<path d="M1142.6,266.4 L1145.6,269.4 L1150.4,264.2"/>
<path d="M1142.6,297.4 L1145.6,300.4 L1150.4,295.2"/>

</g>
<g fill="none" stroke="#333" stroke-width="1.2">
<rect x="1249.8" y="476.6" width="14.6" height="13.8" rx="2"/>
<path d="M1253.5,474.6 V478 M1260.8,474.6 V478" stroke-width="1.4"/>
<path d="M1253,481.6 h8.6 M1253,484.4 h8.6 M1253,487.2 h8.6" stroke-width="1.8" stroke-dasharray="2 1.3"/>
</g>
</svg>
</body>
</html>
